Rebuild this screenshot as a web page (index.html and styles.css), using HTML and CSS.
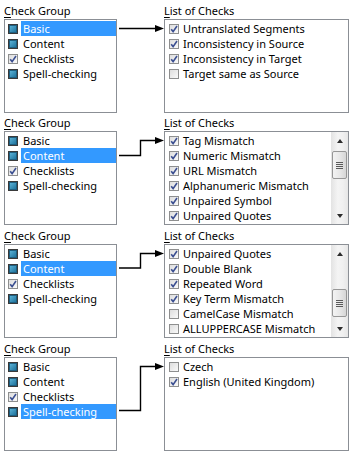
FILE: index.html
```html
<!DOCTYPE html>
<html>
<head>
<meta charset="utf-8">
<link rel="stylesheet" href="styles.css">
</head>
<body>
<svg class="defs" width="0" height="0" aria-hidden="true">
  <defs>
    <linearGradient id="gBlue" x1="0" y1="0" x2="1" y2="1">
      <stop offset="0" stop-color="#5fb6da"/>
      <stop offset="1" stop-color="#1a6f99"/>
    </linearGradient>
    <linearGradient id="gBox" x1="0" y1="0" x2="1" y2="1">
      <stop offset="0" stop-color="#dcdcdc"/>
      <stop offset="1" stop-color="#fbfbfb"/>
    </linearGradient>
    <symbol id="ind" viewBox="0 0 10 10">
      <rect x="0.5" y="0.5" width="9" height="9" fill="#dfe3e6" stroke="#3a3a3a"/>
      <rect x="1.5" y="1.5" width="7" height="7" fill="url(#gBlue)" stroke="#1f5f80"/>
    </symbol>
    <symbol id="chk" viewBox="0 0 10 10">
      <rect x="0.5" y="0.5" width="9" height="9" fill="url(#gBox)" stroke="#8e8f8f"/>
      <path d="M2.2 5.2 L4.1 7.6 L8 2" fill="none" stroke="#3b4f91" stroke-width="1.6"/>
    </symbol>
    <symbol id="unc" viewBox="0 0 10 10">
      <rect x="0.5" y="0.5" width="9" height="9" fill="url(#gBox)" stroke="#8e8f8f"/>
    </symbol>
  </defs>
</svg>

<section class="panel p1">
  <div class="col">
    <div class="label"><u>C</u>heck Group</div>
    <ul class="list group">
      <li class="item sel"><svg class="cb"><use href="#ind"/></svg><span class="txt">Basic</span></li>
      <li class="item"><svg class="cb"><use href="#ind"/></svg><span class="txt">Content</span></li>
      <li class="item"><svg class="cb"><use href="#chk"/></svg><span class="txt">Checklists</span></li>
      <li class="item"><svg class="cb"><use href="#ind"/></svg><span class="txt">Spell-checking</span></li>
    </ul>
  </div>
  <svg class="link" viewBox="0 0 47 94">
    <path d="M2 9.5 H40" fill="none" stroke="#000" stroke-width="1.4"/>
    <polygon points="38,6 47,9.5 38,13" fill="#000"/>
  </svg>
  <div class="col">
    <div class="label"><u>L</u>ist of Checks</div>
    <ul class="list checks">
      <li class="item"><svg class="cb"><use href="#chk"/></svg><span class="txt">Untranslated Segments</span></li>
      <li class="item"><svg class="cb"><use href="#chk"/></svg><span class="txt">Inconsistency in Source</span></li>
      <li class="item"><svg class="cb"><use href="#chk"/></svg><span class="txt">Inconsistency in Target</span></li>
      <li class="item"><svg class="cb"><use href="#unc"/></svg><span class="txt">Target same as Source</span></li>
    </ul>
  </div>
</section>

<section class="panel p2">
  <div class="col">
    <div class="label"><u>C</u>heck Group</div>
    <ul class="list group">
      <li class="item"><svg class="cb"><use href="#ind"/></svg><span class="txt">Basic</span></li>
      <li class="item sel"><svg class="cb"><use href="#ind"/></svg><span class="txt">Content</span></li>
      <li class="item"><svg class="cb"><use href="#chk"/></svg><span class="txt">Checklists</span></li>
      <li class="item"><svg class="cb"><use href="#ind"/></svg><span class="txt">Spell-checking</span></li>
    </ul>
  </div>
  <svg class="link" viewBox="0 0 47 94">
    <path d="M2 24.5 H23.5 V9.5 H40" fill="none" stroke="#000" stroke-width="1.4"/>
    <polygon points="38,6 47,9.5 38,13" fill="#000"/>
  </svg>
  <div class="col">
    <div class="label"><u>L</u>ist of Checks</div>
    <div class="list checks scrolled">
      <ul class="rows">
        <li class="item"><svg class="cb"><use href="#chk"/></svg><span class="txt">Tag Mismatch</span></li>
        <li class="item"><svg class="cb"><use href="#chk"/></svg><span class="txt">Numeric Mismatch</span></li>
        <li class="item"><svg class="cb"><use href="#chk"/></svg><span class="txt">URL Mismatch</span></li>
        <li class="item"><svg class="cb"><use href="#chk"/></svg><span class="txt">Alphanumeric Mismatch</span></li>
        <li class="item"><svg class="cb"><use href="#chk"/></svg><span class="txt">Unpaired Symbol</span></li>
        <li class="item"><svg class="cb"><use href="#chk"/></svg><span class="txt">Unpaired Quotes</span></li>
      </ul>
      <div class="sbar">
        <div class="sbtn"><span class="up"></span></div>
        <div class="track"><div class="thumb top"><span class="grip"></span></div></div>
        <div class="sbtn"><span class="down"></span></div>
      </div>
    </div>
  </div>
</section>

<section class="panel p3">
  <div class="col">
    <div class="label"><u>C</u>heck Group</div>
    <ul class="list group">
      <li class="item"><svg class="cb"><use href="#ind"/></svg><span class="txt">Basic</span></li>
      <li class="item sel"><svg class="cb"><use href="#ind"/></svg><span class="txt">Content</span></li>
      <li class="item"><svg class="cb"><use href="#chk"/></svg><span class="txt">Checklists</span></li>
      <li class="item"><svg class="cb"><use href="#ind"/></svg><span class="txt">Spell-checking</span></li>
    </ul>
  </div>
  <svg class="link" viewBox="0 0 47 94">
    <path d="M2 24 H23.5 V9.5 H40" fill="none" stroke="#000" stroke-width="1.4"/>
    <polygon points="38,6 47,9.5 38,13" fill="#000"/>
  </svg>
  <div class="col">
    <div class="label"><u>L</u>ist of Checks</div>
    <div class="list checks scrolled">
      <ul class="rows">
        <li class="item"><svg class="cb"><use href="#chk"/></svg><span class="txt">Unpaired Quotes</span></li>
        <li class="item"><svg class="cb"><use href="#chk"/></svg><span class="txt">Double Blank</span></li>
        <li class="item"><svg class="cb"><use href="#chk"/></svg><span class="txt">Repeated Word</span></li>
        <li class="item"><svg class="cb"><use href="#chk"/></svg><span class="txt">Key Term Mismatch</span></li>
        <li class="item"><svg class="cb"><use href="#unc"/></svg><span class="txt">CamelCase Mismatch</span></li>
        <li class="item"><svg class="cb"><use href="#unc"/></svg><span class="txt">ALLUPPERCASE Mismatch</span></li>
      </ul>
      <div class="sbar">
        <div class="sbtn"><span class="up"></span></div>
        <div class="track"><div class="thumb low"><span class="grip"></span></div></div>
        <div class="sbtn"><span class="down"></span></div>
      </div>
    </div>
  </div>
</section>

<section class="panel p4">
  <div class="col">
    <div class="label"><u>C</u>heck Group</div>
    <ul class="list group">
      <li class="item"><svg class="cb"><use href="#ind"/></svg><span class="txt">Basic</span></li>
      <li class="item"><svg class="cb"><use href="#ind"/></svg><span class="txt">Content</span></li>
      <li class="item"><svg class="cb"><use href="#chk"/></svg><span class="txt">Checklists</span></li>
      <li class="item sel"><svg class="cb"><use href="#ind"/></svg><span class="txt">Spell-checking</span></li>
    </ul>
  </div>
  <svg class="link" viewBox="0 0 47 94">
    <path d="M2 53.5 H23.5 V9.5 H40" fill="none" stroke="#000" stroke-width="1.4"/>
    <polygon points="38,6 47,9.5 38,13" fill="#000"/>
  </svg>
  <div class="col">
    <div class="label"><u>L</u>ist of Checks</div>
    <ul class="list checks">
      <li class="item"><svg class="cb"><use href="#unc"/></svg><span class="txt">Czech</span></li>
      <li class="item"><svg class="cb"><use href="#chk"/></svg><span class="txt">English (United Kingdom)</span></li>
    </ul>
  </div>
</section>
</body>
</html>
```

FILE: styles.css
```css
* { box-sizing: border-box; }
html, body { margin: 0; padding: 0; background: #fff; }
body {
  width: 354px;
  height: 456px;
  overflow: hidden;
  font-family: "Noto Sans", "Open Sans", sans-serif;
  font-size: 11px;
  color: #000;
  padding-left: 4px;
}
.defs { position: absolute; width: 0; height: 0; overflow: hidden; }
.panel {
  display: grid;
  grid-template-columns: 113px 47px 185px;
  align-items: end;
  padding-top: 3px;
  height: 112px;
}
.p2 { height: 111px; }
.p3 { height: 115px; }
.label {
  line-height: 15px;
  height: 16px;
  white-space: nowrap;
}
.label u { text-decoration-thickness: 1px; text-underline-offset: 2px; }
.list {
  list-style: none;
  margin: 0;
  height: 94px;
  border: 1px solid #8b8f95;
  background: #fff;
  padding: 1px 0;
}
.rows { list-style: none; margin: 0; padding: 0; flex: 1; min-width: 0; }
.item {
  display: flex;
  align-items: center;
  height: 15px;
  white-space: nowrap;
}
.cb { width: 10px; height: 10px; flex: none; }
.group .item { padding-left: 3px; padding-right: 0; }
.group .txt {
  margin-left: 3px;
  padding-left: 2px;
  flex: 1;
  height: 15px;
  line-height: 15px;
}
.group .sel .txt { background: #3399ff; color: #fff; }
.checks .item { padding-left: 4px; }
.checks .txt { margin-left: 4px; line-height: 15px; }
.link { width: 47px; height: 94px; display: block; }
.scrolled { display: flex; padding: 0; }
.scrolled .rows { padding-top: 1px; overflow: hidden; }
.sbar {
  width: 17px;
  flex: none;
  display: flex;
  flex-direction: column;
  background: linear-gradient(to right, #e3e3e3, #f4f4f4 40%, #f0f0f0 70%, #e6e6e6);
}
.sbtn { height: 17px; display: flex; align-items: center; justify-content: center; }
.up, .down { width: 0; height: 0; border-left: 3.5px solid transparent; border-right: 3.5px solid transparent; }
.up { border-bottom: 4px solid #2c2c2c; }
.down { border-top: 4px solid #2c2c2c; }
.track { flex: 1; padding: 0 1px; }
.thumb {
  height: 28px;
  border: 1px solid #979797;
  border-radius: 2px;
  background: linear-gradient(to right, #f3f3f3, #e8e8e8 50%, #d6d6d6);
  display: flex;
  align-items: center;
  justify-content: center;
}
.thumb.top { margin-top: 2px; }
.thumb.low { margin-top: 27px; }
.grip {
  width: 7px;
  height: 7px;
  background: repeating-linear-gradient(to bottom, #5a5a5a 0 1px, transparent 1px 2px);
}
```
